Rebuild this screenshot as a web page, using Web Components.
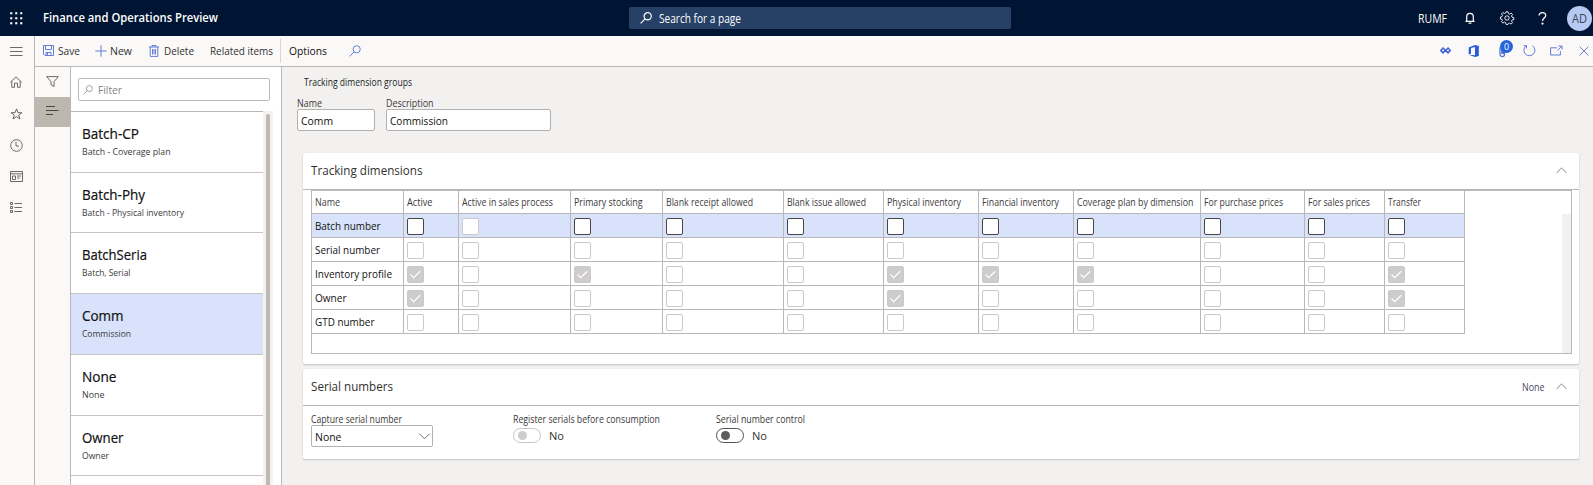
<!DOCTYPE html>
<html lang="en">
<head>
<meta charset="utf-8">
<title>Finance and Operations Preview</title>
<style>
html,body{margin:0;height:100%;overflow:hidden}
body{font-family:"Open Sans","Noto Sans",sans-serif;font-size:11.5px;color:#201f1e;background:#f2f1f0}
</style>
</head>
<body>
<fo-app></fo-app>
<script>
const define = (name, css, html, init) => {
  const t = document.createElement('template');
  t.innerHTML = `<style>*{box-sizing:border-box}${css}</style>${html}`;
  customElements.define(name, class extends HTMLElement {
    connectedCallback() {
      if (this.shadowRoot) return;
      const root = this.attachShadow({ mode: 'open' });
      root.append(t.content.cloneNode(true));
      if (init) init.call(this, root);
    }
  });
};

/* Icons: [width, height, markup]; strokes take the current colour. */
const icons = {
  waffle: [13, 13, '<g fill="currentColor" stroke="none">' + [0, 5, 10].map(y => [0, 5, 10].map(x => `<rect x="${x + .2}" y="${y + .2}" width="2.1" height="2.1"/>`).join('')).join('') + '</g>'],
  lens: [12, 12, '<circle cx="7.7" cy="4.3" r="3.6"/><path d="M5.1 6.9L.6 11.4"/>'],
  bell: [10, 12, '<path d="M1.7 9V4.6a3.3 3.3 0 0 1 6.6 0V9M.4 9.3h9.2M3.6 11.2h2.8"/>'],
  gear: [14, 14, '<path d="M6 .8h2l.4 1.8 1.2.5 1.5-1 1.4 1.4-1 1.5.5 1.2 1.8.4v2l-1.8.4-.5 1.2 1 1.5-1.4 1.4-1.5-1-1.2.5L8 13.4H6l-.4-1.8-1.2-.5-1.5 1-1.4-1.4 1-1.5L2 8.4.4 8V6L2 5.600l.5-1.200-1-1.500L2.900 1.500l1.500 1 1.200-.5z"/><circle cx="7" cy="7" r="2.200"/>'],
  help: [9, 13, '<path d="M1 3.600C1 1.700 2.500.7 4.300.7c2 0 3.400 1.100 3.400 2.900 0 2.300-3.200 2.700-3.200 5.400"/><circle cx="4.500" cy="11.600" r=".5" fill="currentColor"/>'],
  menu: [13, 9, '<path d="M0 .5h12.500M0 4.500h12.500M0 8.500h12.500"/>'],
  home: [12, 12, '<path d="M.4 6.200L6 .9l5.600 5.300M1.800 5v6.300h2.700V7.200h3v4.100h2.700V5"/>'],
  star: [13, 12, '<path d="M6.500.9l1.400 3.800h4L8.700 7l1.200 4-3.400-2.400L3.100 11l1.200-4L1.100 4.700h4z"/>'],
  clock: [13, 13, '<circle cx="6.500" cy="6.500" r="5.800"/><path d="M6 2.800v4.200h3"/>'],
  workspace: [13, 11, '<path d="M.5.500h12v10H.5zM.5 2.800h12M2.500 5h3v3.500h-3zM7 5h4M7 7h2.500"/>'],
  modules: [12, 11, '<path d="M.5.500h2v2h-2zM.5 4.500h2v2h-2zM.5 8.500h2v2h-2zM4.500 1.500h7.500M4.500 5.500h7.500M4.500 9.500h7.500"/>'],
  save: [11, 11, '<path d="M.5.500h10v10H2L.5 9zM2.500.7v3.800h6V.7M3 10.300V7.500h5v2.800M4.500 8v2"/>'],
  plus: [12, 12, '<path d="M6 .3v11.400M.3 6h11.400"/>'],
  trash: [10, 12, '<path d="M0 2h10M3 2V.6h4V2M1.200 2v9.400h7.600V2"/><path d="M3.500 4v5.500M5 4v5.500M6.500 4v5.500"/>'],
  funnel: [13, 11, '<path d="M.7.600h11.600L8 5.700v4.800L5 8.800V5.700z"/>'],
  lines: [13, 9, '<path d="M0 .5h9M0 4.500h12.500M0 8.500h7"/>'],
  chevronUp: [11, 7, '<path d="M.6 5.800L5.500 1l4.900 4.800"/>'],
  chevronDown: [11, 7, '<path d="M.5.800l5 5 5-5"/>'],
  diamonds: [11, 7, '<path stroke-width="1.500" d="M3 1l2.400 2.400L3 5.800.8 3.400zM8 1l2.200 2.400L8 5.800 5.600 3.400z"/>'],
  office: [11, 12, '<path fill="currentColor" stroke="none" d="M7 0l3.800 1.100v9.800L7 12 .8 9.700 7 10.300V2L3 3v5.500L.7 9.400V2.400z"/>'],
  clip: [7, 12, '<path d="M1 2.500v6.800a2.200 2.200 0 0 0 4.500 0V3.500M2.900 3v6M4.200 3v6" stroke-width="1.300"/>'],
  refresh: [13, 13, '<path d="M3 1.900A5.500 5.500 0 1 0 9.500 1.700M.8 1.600h2.700v2.700"/>'],
  popout: [13, 11, '<path d="M7 2.800H.6v7.200h9.800V6M8.300 1h3.700v3.700M11.900 1.100L7.500 5.500"/>'],
  close: [10, 10, '<path d="M.6.600l8.800 8.800M9.400.600L.6 9.400"/>'],
  check: [17, 17, '<path stroke-width="1.200" d="M3.500 8.500l3.200 3.100 6.600-6.400"/>']
};
define('fo-icon', ':host{display:block;flex:none}svg{display:block;overflow:visible}', '', function (root) {
  const [w, h, body] = icons[this.getAttribute('name')];
  root.innerHTML += `<svg width="${w}" height="${h}" viewBox="0 0 ${w} ${h}" fill="none" stroke="currentColor" stroke-width="${this.getAttribute('weight') || .9}">${body}</svg>`;
});

/* A single-line text condensed to a given width. */
define('fo-text', ':host{display:block;flex:none;white-space:nowrap}span{display:inline-block;transform-origin:0 50%}', '<span><slot></slot></span>', function (root) {
  const w = parseFloat(this.getAttribute('w')), span = root.querySelector('span');
  if (!w) return;
  const natural = span.getBoundingClientRect().width;
  span.style.transform = `scaleX(${w / natural})`;
  this.style.width = w + 'px';
});

define('fo-topbar', `
:host{display:grid;grid-template-columns:629px 382px 1fr;height:36px;background:#001433;color:#fff;align-items:center}
.l,.r,.s{display:flex;align-items:center}
.l{padding-left:10px}.l fo-text{margin:-2px 0 0 20px;font-size:12.8px;font-weight:600}
.s{height:22px;background:#264066;border-radius:2px;padding-left:11px;gap:7px;font-size:12px}
.r{padding-left:407px;font-size:11.7px}
.bell{margin-left:18px}.gear{margin-left:24.500px}.help{margin-left:24.500px}
.av{margin-left:20px;width:25px;height:25px;border-radius:50%;background:#b5c9f2;color:#3c4558;display:grid;place-items:center}`,
`<div class="l"><fo-icon name="waffle"></fo-icon><fo-text w="175">Finance and Operations Preview</fo-text></div>
<div class="s"><fo-icon name="lens" weight="1.200"></fo-icon><fo-text w="82">Search for a page</fo-text></div>
<div class="r"><fo-text w="29">RUMF</fo-text><fo-icon class="bell" name="bell" weight="1.200"></fo-icon><fo-icon class="gear" name="gear"></fo-icon><fo-icon class="help" name="help" weight="1.300"></fo-icon><div class="av"><fo-text w="15">AD</fo-text></div></div>`);

define('fo-rail', `
:host{display:flex;flex-direction:column;align-items:center;width:35px;background:#faf9f8;border-right:1px solid #b9b8b7;color:#5c5a58;padding-right:2px}
div{height:31.200px;display:grid;place-items:center}div:first-child{height:30px;padding-top:2px;color:#323130}
div:nth-child(2),div:nth-child(3){padding-bottom:1px}`,
['menu', 'home', 'star', 'clock', 'workspace', 'modules'].map(n => `<div><fo-icon name="${n}"></fo-icon></div>`).join(''));

define('fo-actions', `
:host{display:flex;align-items:center;height:31px;background:#faf9f8;border-bottom:1px solid #b9b8b7;padding:0 4px 1px 8px;color:#323130}
fo-icon{color:#5471d3}
.b{display:flex;align-items:center}
.sep{width:1px;height:24px;background:#d8d6d4;margin:0 8px 0 7px}
.r{margin-left:auto;display:flex;align-items:center}
.clip{position:relative;margin:0 0 0 20px;width:10px;height:12px}
.badge{position:absolute;left:1px;top:-5px;width:13px;height:13px;border-radius:50%;background:#2563d9;color:#fff;font-size:9px;line-height:13px;text-align:center}`,
`<div class="b" style="gap:4px"><fo-icon name="save"></fo-icon><fo-text w="22">Save</fo-text></div>
<div class="b" style="gap:3px;margin-left:15px"><fo-icon name="plus"></fo-icon><fo-text w="22">New</fo-text></div>
<div class="b" style="gap:5px;margin-left:17px"><fo-icon name="trash"></fo-icon><fo-text w="30">Delete</fo-text></div>
<fo-text w="63" style="margin-left:16px">Related items</fo-text><div class="sep"></div>
<fo-text w="38" style="color:#111">Options</fo-text><fo-icon name="lens" style="margin-left:21.500px"></fo-icon>
<div class="r"><fo-icon name="diamonds" style="color:#3b5fd0"></fo-icon><fo-icon name="office" style="margin-left:17px;color:#2b5bd7"></fo-icon>
<div class="clip"><fo-icon name="clip"></fo-icon><div class="badge">0</div></div>
<fo-icon name="refresh" style="margin-left:14px"></fo-icon><fo-icon name="popout" style="margin-left:14px"></fo-icon><fo-icon name="close" style="margin-left:16px"></fo-icon></div>`);

define('fo-strip', `
:host{display:block;width:36px;background:#faf9f8;border-right:1px solid #b9b8b7;color:#5c5a58}
div{height:30px;display:grid;place-items:center;padding:0 1px 2px 0}.on{background:#beb7af;color:#3b3a39;padding-bottom:3px}`,
`<div><fo-icon name="funnel"></fo-icon></div><div class="on"><fo-icon name="lines"></fo-icon></div>`);

define('fo-item', `
:host{display:block;height:61px;border-bottom:1px solid #c6c5c4;padding:12px 0 0 11px;background:#fff;color:#111}
:host([short]){height:60px}
:host([selected]){background:#d8e3fb}
.t{font-size:13.700px;line-height:20px;-webkit-text-stroke:.2px currentColor}.d{font-size:9.800px;line-height:14px;color:#3b3a39;margin-top:.500px}`,
`<div class="t"><slot name="title"></slot></div><div class="d"><slot></slot></div>`);

const items = [['Batch-CP', 57, 'Batch - Coverage plan', 88.5], ['Batch-Phy', 63, 'Batch - Physical inventory', 102, 'short'], ['BatchSeria', 65, 'Batch, Serial', 48.5], ['Comm', 41.5, 'Commission', 49, 'selected'], ['None', 34.5, 'None', 22.5], ['Owner', 41.5, 'Owner', 27, 'short']];
define('fo-list', `
:host{display:flex;flex-direction:column;width:211px;background:#fff;border-right:1px solid #b9b8b7;overflow:hidden}
.f{flex:none;margin:11px 0 0 7px;width:192px;height:23px;border:1px solid #b9b8b7;border-radius:2px;display:flex;align-items:center;padding-left:4px;gap:5px;color:#858381}
.f fo-icon{zoom:.83}
.body{flex:1;min-height:0;display:flex;margin-top:10px}
.items{width:192px;border-top:1px solid #b9b8b7;overflow:hidden}
.track{width:10px;background:#f3f2f1;padding:3px 3px 0}
.thumb{height:100%;width:4px;background:#beb9b4;border-radius:2px 2px 0 0}`,
`<div class="f"><fo-icon name="lens"></fo-icon><fo-text w="24">Filter</fo-text></div>
<div class="body"><div class="items">${items.map(([t, w, d, x, a]) => `<fo-item ${a || ''}><fo-text slot="title" w="${w}">${t}</fo-text><fo-text w="${x}">${d}</fo-text></fo-item>`).join('')}</div>
<div class="track"><div class="thumb"></div></div></div>`);

define('fo-field', `
:host{display:block}
.l{font-size:10px;line-height:14px;height:14px;padding-top:.500px;color:#3b3a39}
.v{height:22px;border:1px solid #b3b2b1;border-radius:2px;background:#fff;color:#111;display:flex;align-items:center;justify-content:space-between;padding:0 2px 0 3px}`,
`<div class="l"><slot name="label"></slot></div><div class="v"><slot></slot></div>`);

define('fo-toggle', `
:host{display:block;color:#c8c6c4;--knob:#cfcdcb}
:host([enabled]){color:#555350;--knob:#5f5d5b}
.l{font-size:10px;line-height:14px;height:14px;padding-top:.500px;color:#3b3a39}
.v{display:flex;align-items:center;gap:8px;height:21px}
.p{width:28px;height:15px;border:1px solid currentColor;border-radius:8px;padding:2px 0 0 4px;background:#fff}
.k{width:9px;height:9px;border-radius:50%;background:var(--knob)}
fo-text{color:#323130}`,
`<div class="l"><slot></slot></div><div class="v"><div class="p"><div class="k"></div></div><fo-text w="15">No</fo-text></div>`);

define('fo-tab', `
:host{display:block;background:#fff;border-radius:2px;box-shadow:0 1px 2px rgba(0,0,0,.2)}
.h{height:37px;border-bottom:1px solid #b9b8b7;display:flex;align-items:center;padding:0 12px 1px 7.500px}
.t{font-size:13px;color:#323130;margin-top:-1px}.s{margin-left:auto;margin-right:12px;font-size:10.200px;color:#484664}
fo-icon{color:#767472}`,
`<div class="h"><div class="t"><slot name="title"></slot></div><div class="s"><slot name="summary"></slot></div><fo-icon name="chevronUp" weight=".9"></fo-icon></div><slot></slot>`);

define('fo-check', `
:host{display:block;width:17px;height:17px;border:1px solid #cccac8;border-radius:2px;background:#fff;color:#fff}
:host([enabled]){border-color:#484644}:host([checked]){background:#cfcdcc}
fo-icon{display:none;margin:-1px}:host([checked]) fo-icon{display:block}`, '<fo-icon name="check"></fo-icon>');

const cols = [['Name', 25], ['Active', 25.5], ['Active in sales process', 91], ['Primary stocking', 68.5], ['Blank receipt allowed', 87], ['Blank issue allowed', 79], ['Physical inventory', 74], ['Financial inventory', 77], ['Coverage plan by dimension', 116.5], ['For purchase prices', 79], ['For sales prices', 62], ['Transfer', 33]];
const rows = [['Batch number', 65.5, []], ['Serial number', 65, []], ['Inventory profile', 77, [1, 3, 6, 7, 8, 11]], ['Owner', 31.5, [1, 6, 11]], ['GTD number', 59.5, []]];
define('fo-grid', `
:host{display:flex;width:1261px;height:164px;border:1px solid #b9b8b7;margin-left:8px;background:#fff}
.g{display:grid;grid-template-columns:92px 55px 112px 92px 121px 100px 95px 95px 127px 104px 80px 80px;grid-template-rows:23px repeat(5,24px);align-content:start}
.c{border-right:1px solid #b9b8b7;border-bottom:1px solid #b9b8b7;padding:0 0 1px 3px;display:flex;align-items:center;color:#111}
.c.h{font-size:10px;color:#3b3a39}
.c.k{padding:4px 0 0 3px;align-items:flex-start}.on{background:#d8e3fb}
.bar{margin:23px 0 0 auto;width:9px;background:#f2f1f0}`,
`<div class="g">${cols.map(([t, w]) => `<div class="c h"><fo-text w="${w}">${t}</fo-text></div>`).join('')}${rows.map(([t, w, on], r) => cols.map((_, c) => c ? `<div class="c k ${r ? '' : 'on'}"><fo-check ${r === 0 && c !== 2 ? 'enabled' : ''} ${on.includes(c) ? 'checked' : ''}></fo-check></div>` : `<div class="c ${r ? '' : 'on'}"><fo-text w="${w}">${t}</fo-text></div>`).join('')).join('')}</div><div class="bar"></div>`);

define('fo-main', `
:host{display:block;padding:8px 14px 0 15px;background:#f2f1f0}
.crumb{margin-left:7px;font-size:10px;line-height:14px}
.fields{display:flex;gap:11px;margin-top:6px}
fo-tab{margin-left:6px}
.row{display:grid;grid-template-columns:202px 202.500px auto;padding:5px 0 12px 8px}
.row fo-field{width:122px}.row fo-icon{color:#605e5c}`,
`<fo-text class="crumb" w="108">Tracking dimension groups</fo-text>
<div class="fields"><fo-field style="width:78px"><fo-text slot="label" w="25">Name</fo-text><fo-text w="32">Comm</fo-text></fo-field>
<fo-field style="width:165px"><fo-text slot="label" w="47.500">Description</fo-text><fo-text w="58">Commission</fo-text></fo-field></div>
<fo-tab style="margin-top:22px;height:211px"><fo-text slot="title" w="111.500">Tracking dimensions</fo-text><fo-grid></fo-grid></fo-tab>
<fo-tab style="margin-top:5px;height:90px"><fo-text slot="title" w="82">Serial numbers</fo-text><fo-text slot="summary" w="22.500">None</fo-text>
<div class="row"><fo-field><fo-text slot="label" w="91">Capture serial number</fo-text><fo-text w="26.500">None</fo-text><fo-icon name="chevronDown"></fo-icon></fo-field>
<fo-toggle><fo-text w="147">Register serials before consumption</fo-text></fo-toggle>
<fo-toggle enabled><fo-text w="89">Serial number control</fo-text></fo-toggle></div></fo-tab>`);

define('fo-app', `
:host{display:grid;height:485px;grid-template-rows:36px 1fr}
.a{display:grid;grid-template-columns:35px 1fr;min-height:0}
.b{display:grid;grid-template-rows:31px 1fr;min-height:0}
.c{display:grid;grid-template-columns:36px 211px 1fr;min-height:0}`,
`<fo-topbar></fo-topbar><div class="a"><fo-rail></fo-rail><div class="b"><fo-actions></fo-actions><div class="c"><fo-strip></fo-strip><fo-list></fo-list><fo-main></fo-main></div></div></div>`);
</script>
</body>
</html>
